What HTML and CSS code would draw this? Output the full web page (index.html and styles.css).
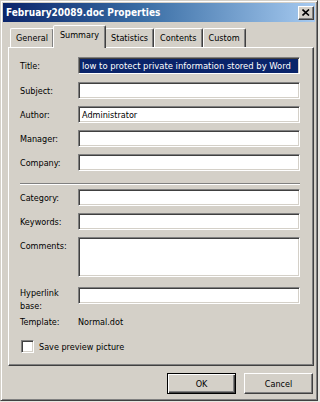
FILE: index.html
```html
<!DOCTYPE html>
<html lang="en">
<head>
    <meta charset="UTF-8">
    <meta name="viewport" content="width=device-width, initial-scale=1.0">
    <title>February20089.doc Properties</title>
    <link rel="stylesheet" href="styles.css">
</head>
<body>
    <div class="window">
        <div class="titlebar">
            <span class="title">February20089.doc Properties</span>
            <button type="button" class="close-button" aria-label="Close">
                <svg width="8" height="7" viewBox="0 0 8 7">
                    <path d="M0.5 0.5 L7 6.5 M7 0.5 L0.5 6.5" stroke="#000" stroke-width="1.6" fill="none"/>
                </svg>
            </button>
        </div>
        <div class="dialog-body">
            <div class="tabs">
                <div class="tab">General</div>
                <div class="tab active">Summary</div>
                <div class="tab">Statistics</div>
                <div class="tab">Contents</div>
                <div class="tab">Custom</div>
            </div>
            <div class="panel">
                <div class="field first">
                    <label>Title:</label>
                    <div class="input"><span class="selected">low to protect private information stored by Word</span></div>
                </div>
                <div class="field">
                    <label>Subject:</label>
                    <div class="input"></div>
                </div>
                <div class="field">
                    <label>Author:</label>
                    <div class="input">Administrator</div>
                </div>
                <div class="field">
                    <label>Manager:</label>
                    <div class="input"></div>
                </div>
                <div class="field">
                    <label>Company:</label>
                    <div class="input"></div>
                </div>

                <div class="separator"></div>

                <div class="field">
                    <label>Category:</label>
                    <div class="input"></div>
                </div>
                <div class="field">
                    <label>Keywords:</label>
                    <div class="input"></div>
                </div>
                <div class="field top">
                    <label>Comments:</label>
                    <div class="input tall"></div>
                </div>
                <div class="field top hyperlink">
                    <label>Hyperlink<br>base:</label>
                    <div class="input"></div>
                </div>
                <div class="field template">
                    <label>Template:</label>
                    <span class="value">Normal.dot</span>
                </div>
                <div class="checkbox-row">
                    <span class="checkbox"></span>
                    <span>Save preview picture</span>
                </div>
            </div>
            <div class="buttons">
                <button type="button" class="btn default">OK</button>
                <button type="button" class="btn">Cancel</button>
            </div>
        </div>
    </div>
</body>
</html>
```

FILE: styles.css
```css
body {
    margin: 0;
    background: #e8e6e1;
    font-family: 'DejaVu Sans Condensed', 'DejaVu Sans', sans-serif;
    font-size: 9px;
    color: #000;
}

.window {
    width: 318px;
    height: 401px;
    box-sizing: border-box;
    background: #d4d0c8;
    border: 1px solid;
    border-color: #d4d0c8 #404040 #404040 #d4d0c8;
    box-shadow: inset 1px 1px 0 #fff, inset -1px -1px 0 #808080;
    padding: 2px;
}

.titlebar {
    height: 19px;
    display: flex;
    align-items: center;
    justify-content: space-between;
    padding: 0 1px 0 3px;
    background: linear-gradient(to right, #0a246a, #3a6ea5 45%, #a6caf0);
}

.title {
    color: #fff;
    font-weight: bold;
    font-size: 10px;
}

.close-button {
    width: 16px;
    height: 14px;
    padding: 0;
    display: flex;
    align-items: center;
    justify-content: center;
    background: #d4d0c8;
    border: 1px solid;
    border-color: #fff #404040 #404040 #fff;
    box-shadow: inset -1px -1px 0 #808080;
}

.dialog-body {
    padding: 0 1px 0 5px;
}

.tabs {
    display: flex;
    align-items: flex-end;
    height: 22px;
    margin-top: 3px;
    padding-left: 2px;
}

.tab {
    height: 19px;
    box-sizing: border-box;
    padding: 4px 5px 0;
    border: 1px solid;
    border-bottom: none;
    border-color: #fff #404040 transparent #fff;
    box-shadow: inset -1px 0 0 #808080;
    border-radius: 2px 2px 0 0;
}

.tab.active {
    position: relative;
    z-index: 1;
    height: 23px;
    margin: 0 -1px -1px -1px;
    padding: 4px 6px 0;
    background: #d4d0c8;
}

.panel {
    height: 319px;
    box-sizing: border-box;
    border: 1px solid;
    border-color: #fff #404040 #404040 #fff;
    box-shadow: inset -1px -1px 0 #808080;
    padding: 9px 13px 0 11px;
    display: flex;
    flex-direction: column;
}

.field {
    display: flex;
    align-items: center;
    margin-bottom: 7px;
}

.field.first {
    margin-bottom: 8px;
}

.field.top {
    align-items: flex-start;
}

.field label {
    width: 58px;
    flex-shrink: 0;
}

.field.top label {
    padding-top: 3px;
    line-height: 13px;
}

.input {
    flex: 1;
    height: 17px;
    box-sizing: border-box;
    background: #fff;
    border: 1px solid;
    border-color: #808080 #fff #fff #808080;
    box-shadow: inset 1px 1px 0 #404040, inset -1px -1px 0 #d4d0c8;
    padding: 2px 2px 0 3px;
    white-space: nowrap;
    overflow: hidden;
    line-height: 12px;
}

.input.tall {
    height: 40px;
}

.selected {
    display: block;
    margin: -1px -1px 0 -2px;
    padding: 1px 1px 1px 2px;
    background: #0a246a;
    color: #fff;
    font-size: 9.4px;
}

.field.hyperlink {
    height: 17px;
    margin-top: 3px;
}

.field.hyperlink label {
    padding-top: 0;
}

.separator {
    margin: 5px 0 4px;
    height: 0;
    border-top: 1px solid #808080;
    border-bottom: 1px solid #fff;
}

.field.template {
    margin-top: 4px;
    height: 13px;
}

.checkbox-row {
    display: flex;
    align-items: center;
    gap: 5px;
    margin-top: 5px;
    padding-left: 1px;
}

.checkbox {
    width: 13px;
    height: 13px;
    box-sizing: border-box;
    background: #fff;
    border: 1px solid;
    border-color: #808080 #fff #fff #808080;
    box-shadow: inset 1px 1px 0 #404040, inset -1px -1px 0 #d4d0c8;
}

.buttons {
    display: flex;
    justify-content: flex-end;
    gap: 8px;
    margin-top: 7px;
    padding-right: 1px;
}

.btn {
    width: 69px;
    height: 21px;
    font-family: inherit;
    font-size: 9px;
    background: #d4d0c8;
    border: 1px solid;
    border-color: #fff #404040 #404040 #fff;
    box-shadow: inset -1px -1px 0 #808080;
    padding: 0;
}

.btn.default {
    border: 1px solid #000;
    box-shadow: inset 1px 1px 0 #fff, inset -1px -1px 0 #404040, inset -2px -2px 0 #808080;
}
```
